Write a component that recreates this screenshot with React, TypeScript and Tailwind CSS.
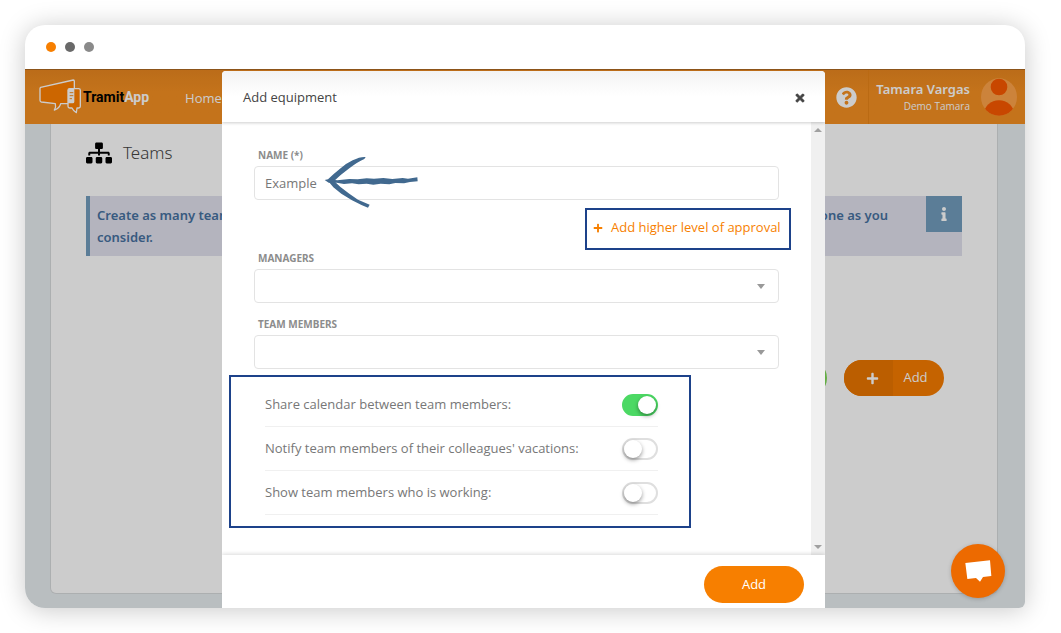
import React, { useState } from 'react';
import { FaInfo, FaPlus, FaQuestionCircle, FaSitemap, FaTimes } from 'react-icons/fa';

const settings = [
  { id: 'share-calendar', label: 'Share calendar between team members:', enabled: true },
  { id: 'notify-vacations', label: "Notify team members of their colleagues' vacations:", enabled: false },
  { id: 'show-working', label: 'Show team members who is working:', enabled: false },
];

const Logo: React.FC = () => (
  <a href="#" className="flex items-center gap-0.5">
    <svg width="42" height="36" viewBox="0 0 126 108" fill="none" aria-hidden="true">
      <path
        d="M5 25 L103 3 Q106 3 106 7 V71 Q106 74 102 74 H65 Q62 88 46 93 Q52 84 49 74 L7 69 Q3 68 3 64 V29 Q3 26 5 25 Z"
        fill="#ff8000"
        stroke="#ffffff"
        strokeWidth="4"
        strokeLinejoin="round"
      />
      <path
        d="M92 29 H119 Q124 29 124 34 V82 Q124 87 119 87 H114 L112 101 Q104 97 99 87 H92 Q87 87 87 82 V34 Q87 29 92 29 Z"
        fill="#ff8000"
        stroke="#ffffff"
        strokeWidth="4"
        strokeLinejoin="round"
      />
      <path d="M92 29 H106 V68 Q106 73 101 73 H87 V34 Q87 29 92 29 Z" fill="#ffffff" />
      <path d="M92 41 H103 M92 50 H103 M92 59 H99" stroke="#f59022" strokeWidth="3" />
    </svg>
    <span className="font-['Roboto',sans-serif] text-[14px] font-bold text-black">
      Tramit<span className="text-white">App</span>
    </span>
  </a>
);

const Avatar: React.FC = () => (
  <svg width="36" height="38" viewBox="0 0 108 114" aria-hidden="true">
    <defs>
      <clipPath id="avatar-clip">
        <ellipse cx="54" cy="57" rx="54" ry="56" />
      </clipPath>
    </defs>
    <g clipPath="url(#avatar-clip)">
      <rect width="108" height="114" fill="#ffa44a" />
      <circle cx="54" cy="27" r="25" fill="#fb5900" />
      <ellipse cx="54" cy="108" rx="45" ry="41" fill="#fb5900" />
    </g>
  </svg>
);

const Arrow: React.FC = () => (
  <svg
    width="94"
    height="54"
    viewBox="0 0 282 162"
    className="pointer-events-none absolute -top-3 left-[70px]"
    aria-hidden="true"
  >
    <g fill="#41698f">
      <path d="M125 9 L121 15 Q100 24 76 43 Q50 62 27 84 L15 84 L12 76 Q30 58 48 44 Q65 29 86 19 Q108 8 124 9 Z" />
      <path d="M2 78 L12 76 L40 79 L76 75 L101 76 L128 73 L150 74 L178 72 L205 75 L236 72 L252 74 L280 70 L281 82 L258 84 L240 88 L214 87 L196 91 L170 89 L148 92 L128 89 L104 91 L84 88 L60 90 L38 86 L14 86 Z" />
      <path d="M13 82 L30 81 Q48 100 76 119 L102 137 L137 152 L132 161 L114 154 L84 139 L52 119 L28 100 Z" />
    </g>
  </svg>
);

const Page: React.FC = () => (
  <div className="col-start-1 row-start-1 flex min-w-0 flex-col bg-[#e8eef1]">
    <header className="flex h-[55px] items-center border-t border-[#b06a20] bg-gradient-to-b from-[#ea8820] to-[#f59022] to-40% pl-3.5 pr-2 text-white">
      <Logo />
      <a href="#" className="ml-9 pt-1 text-[13px]">
        Home
      </a>
      <div className="ml-auto flex h-full items-center">
        <button type="button" aria-label="Help" className="flex h-full items-center border-r border-[#e98518] pr-[11px]">
          <FaQuestionCircle size={21} />
        </button>
        <div className="pl-[7px] text-right">
          <p className="font-['Noto_Sans',sans-serif] text-[13px] leading-[18px] font-semibold">Tamara Vargas</p>
          <p className="text-[10px] leading-4">Demo Tamara</p>
        </div>
        <div className="ml-[11px]">
          <Avatar />
        </div>
      </div>
    </header>

    <main className="mr-[27px] mb-3.5 ml-[25px] flex-1 rounded-b-md border border-t-0 border-[#d8dbdd] bg-white pr-[35px] pl-[35px]">
      <h1 className="flex items-center gap-[11px] pt-[15px] font-['Noto_Sans',sans-serif] text-[17px] leading-7 font-light text-[#444]">
        <FaSitemap size={26} className="text-black" />
        Teams
      </h1>
      <div className="mt-[29px] flex items-start border-l-4 border-[#729dbd] bg-[#e1e1ee]">
        <div className="flex-1 py-2 pl-[7px] font-['Noto_Sans',sans-serif] text-[13px] leading-[22px] font-semibold text-[#4671a0]">
          <p className="flex justify-between pr-[38px]">
            <span>Create as many teams</span>
            <span>one as you</span>
          </p>
          <p>consider.</p>
        </div>
        <div className="flex size-9 items-center justify-center bg-[#729dbd] text-white">
          <FaInfo size={14} />
        </div>
      </div>
      <div className="mt-[104px] flex justify-end gap-[17px] pr-[18px]">
        <span className="h-9 w-20 rounded-full bg-[#7ed957]" />
        <button type="button" className="flex h-9 w-[100px] overflow-hidden rounded-full bg-[#f77c00] text-[13px] text-white">
          <span className="flex h-full w-[49px] items-center justify-center bg-[#ea7600] pl-2">
            <FaPlus size={13} />
          </span>
          <span className="flex h-full flex-1 items-center justify-center pr-1.5">Add</span>
        </button>
      </div>
    </main>
  </div>
);

const SelectField: React.FC<{ id: string; label: string }> = ({ id, label }) => (
  <div>
    <label
      htmlFor={id}
      className="mb-[3px] ml-1 block font-['Noto_Sans',sans-serif] text-[10px] leading-4 font-bold text-[#8c8c8c]"
    >
      {label}
    </label>
    <div className="relative">
      <select id={id} className="block h-[34px] w-full appearance-none rounded border border-[#e3e3e3] bg-white px-2.5 text-[13px]">
        <option value=""></option>
      </select>
      <span className="pointer-events-none absolute top-[15px] right-3.5 border-x-4 border-t-[5px] border-x-transparent border-t-[#999]" />
    </div>
  </div>
);

const EquipmentModal: React.FC = () => {
  const [name, setName] = useState('Example');

  return (
    <div role="dialog" aria-labelledby="modal-title" className="mt-0.5 flex w-[603px] max-w-full flex-col overflow-hidden rounded-t bg-white">
      <div className="relative flex h-[51px] items-center justify-between bg-gradient-to-b from-[#f3f3f3] to-white to-50% pt-0.5 pr-[19px] pl-[21px] shadow-[0_1px_3px_rgba(0,0,0,0.2)]">
        <h2 id="modal-title" className="text-[13px] text-[#444]">
          Add equipment
        </h2>
        <button type="button" aria-label="Close" className="text-[#444]">
          <FaTimes size={12} stroke="currentColor" strokeWidth={30} />
        </button>
      </div>

      <div className="flex flex-1">
        <form className="flex-1 pt-[25px] pb-[27px]">
          <div className="px-8">
            <label
              htmlFor="name"
              className="mb-[3px] ml-1 block font-['Noto_Sans',sans-serif] text-[10px] leading-4 font-bold text-[#8c8c8c]"
            >
              NAME (*)
            </label>
            <div className="relative">
              <input
                id="name"
                value={name}
                onChange={(e) => setName(e.target.value)}
                className="block h-[34px] w-full rounded border border-[#e3e3e3] bg-white px-2.5 text-[13px] text-[#777]"
              />
              <Arrow />
            </div>
            <div className="mt-2 -mr-3 flex justify-end">
              <button
                type="button"
                className="flex h-[42px] w-[206px] items-center gap-2 border-2 border-[#1d428a] pb-0.5 pl-1.5 text-[13px] text-[#f77f00]"
              >
                <FaPlus size={10} />
                Add higher level of approval
              </button>
            </div>
            <div className="flex flex-col gap-[13px]">
              <SelectField id="managers" label="MANAGERS" />
              <SelectField id="members" label="TEAM MEMBERS" />
            </div>
          </div>

          <div className="mt-1.5 mr-[120px] ml-[7px] border-2 border-[#1d428a] pt-1.5 pr-[31px] pb-[11px] pl-[34px]">
            {settings.map((item) => (
              <div key={item.id} className="flex h-11 items-center justify-between border-b border-[#f0f0f0]">
                <label htmlFor={item.id} className="text-[13px] text-[#777]">
                  {item.label}
                </label>
                <input
                  id={item.id}
                  type="checkbox"
                  defaultChecked={item.enabled}
                  className="flex h-[22px] w-9 appearance-none items-center rounded-full border-2 border-[#dfdfdf] bg-white before:size-[18px] before:rounded-full before:bg-white before:shadow-[0_2px_4px_rgba(0,0,0,0.4)] checked:justify-end checked:border-[#4cd964] checked:bg-[#4cd964]"
                />
              </div>
            ))}
          </div>
        </form>

        <div className="flex w-3.5 flex-col items-center justify-between bg-[#f0f0f0] py-1.5">
          <span className="border-x-4 border-b-4 border-x-transparent border-b-[#a0a0a0]" />
          <span className="border-x-4 border-t-4 border-x-transparent border-t-[#a0a0a0]" />
        </div>
      </div>

      <div className="relative flex h-[53px] items-center justify-end pt-1.5 pr-[21px] shadow-[0_-1px_4px_rgba(0,0,0,0.15)]">
        <button type="button" className="h-[37px] w-[100px] rounded-full bg-[#f77f00] text-[13px] text-white">
          Add
        </button>
      </div>
    </div>
  );
};

const App: React.FC = () => {
  return (
    <div className="bg-white pt-[25px] pr-9 pb-[25px] pl-[25px] font-['Open_Sans','Noto_Sans',sans-serif]">
      <div className="overflow-hidden rounded-t-[20px] rounded-br-md rounded-bl-[20px] bg-white shadow-[0_2px_26px_rgba(0,0,0,0.22)]">
        <div className="flex h-11 items-center gap-[9px] pl-[21px]">
          <span className="size-2.5 rounded-full bg-[#f77f00]" />
          <span className="size-2.5 rounded-full bg-[#696969]" />
          <span className="size-2.5 rounded-full bg-[#8a8a8a]" />
        </div>

        <div className="relative grid grid-cols-1">
          <Page />
          <div className="relative col-start-1 row-start-1 flex justify-center bg-black/20 pr-[3px]">
            <EquipmentModal />
          </div>
          <button
            type="button"
            aria-label="Open chat"
            className="absolute right-5 bottom-2.5 flex size-[54px] items-center justify-center rounded-full bg-[#ed6a00] shadow-[0_1px_4px_rgba(0,0,0,0.2)]"
          >
            <svg width="27" height="22" viewBox="0 0 81 66" fill="#ffffff" aria-hidden="true">
              <path d="M1 9 L75 1 L79 48 L54 51 L45 65 L33 54 L7 57 Z" />
            </svg>
          </button>
        </div>
      </div>
    </div>
  );
};

export default App;
